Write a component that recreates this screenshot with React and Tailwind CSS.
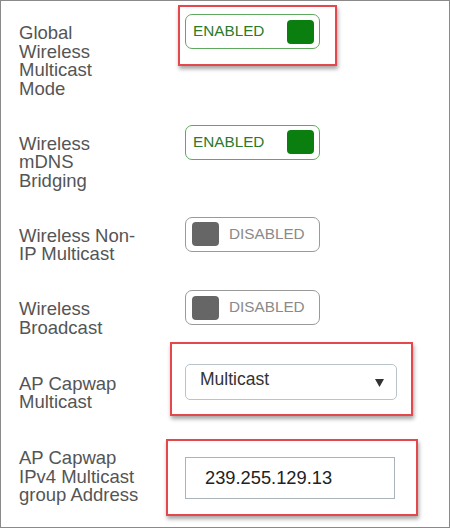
import React from "react";

const font = { fontFamily: '"Liberation Sans", Arial, sans-serif' };

function Toggle({ on }) {
  if (on) {
    return (
      <div className="flex h-[35px] w-[135px] items-center justify-between rounded-[7px] border border-[#5fa85f] bg-white pl-[7px] pr-[5px]">
        <span className="pb-[1px] text-[15.3px] leading-none text-[#2b7a2b]">ENABLED</span>
        <span className="h-[24px] w-[27px] rounded-[4px] bg-[#0a7f0f]" />
      </div>
    );
  }
  return (
    <div className="flex h-[35px] w-[135px] items-center rounded-[7px] border border-[#9a9a9a] bg-white pl-[6px]">
      <span className="h-[24px] w-[27px] rounded-[4px] bg-[#666666]" />
      <span className="ml-[10px] pb-[1px] text-[15.3px] leading-none text-[#8a8a8a]">DISABLED</span>
    </div>
  );
}

function Annotated({ children, box }) {
  return (
    <div className="relative inline-block">
      {children}
      <span className={`pointer-events-none absolute border-2 border-[#e4474c] shadow-[1px_3px_4px_rgba(0,0,0,0.35)] ${box}`} />
    </div>
  );
}

function Row({ label, children, pad = "pt-[10px]" }) {
  return (
    <div className="grid grid-cols-[122px_1fr] gap-x-[44px]">
      <div className={`${pad} text-[18.5px] leading-[18.5px] text-[#555555]`}>{label}</div>
      <div>{children}</div>
    </div>
  );
}

export default function App() {
  return (
    <div style={font} className="h-[528px] w-[450px] overflow-hidden border border-[#8a8a8a] bg-white pl-[18px] pt-[13px]">
      <div className="flex flex-col gap-[26.5px]">
        <Row label="Global Wireless Multicast Mode">
          <Annotated box="-left-[7px] -top-[9px] -right-[17px] -bottom-[17px]">
            <Toggle on />
          </Annotated>
        </Row>
        <Row label="Wireless mDNS Bridging">
          <Toggle on />
        </Row>
        <Row label="Wireless Non-IP Multicast">
          <Toggle />
        </Row>
        <Row label="Wireless Broadcast">
          <Toggle />
        </Row>
        <Row label="AP Capwap Multicast" pad="pt-[11px]">
          <Annotated box="-left-[15px] -top-[22px] -right-[16px] -bottom-[16px]">
            <div className="flex h-[36px] w-[212px] items-center justify-between rounded-[5px] border border-[#b9c3ca] bg-white pb-[4px] pl-[14px] pr-[12px]">
              <span className="text-[17.5px] leading-none text-[#333333]">Multicast</span>
              <svg width="9" height="8" viewBox="0 0 9 8" className="mt-[6px]">
                <path d="M0 0H9L4.5 8Z" fill="#333333" />
              </svg>
            </div>
          </Annotated>
        </Row>
        <Row label="AP Capwap IPv4 Multicast group Address" pad="pt-[11px]">
          <div className="mt-[19px]">
            <Annotated box="-left-[19px] -top-[18px] -right-[23px] -bottom-[17px]">
              <div className="flex h-[42px] w-[210px] items-center border border-[#a9b3b9] bg-white pl-[19px]">
                <span className="text-[18.3px] leading-none text-[#222222]">239.255.129.13</span>
              </div>
            </Annotated>
          </div>
        </Row>
      </div>
    </div>
  );
}
